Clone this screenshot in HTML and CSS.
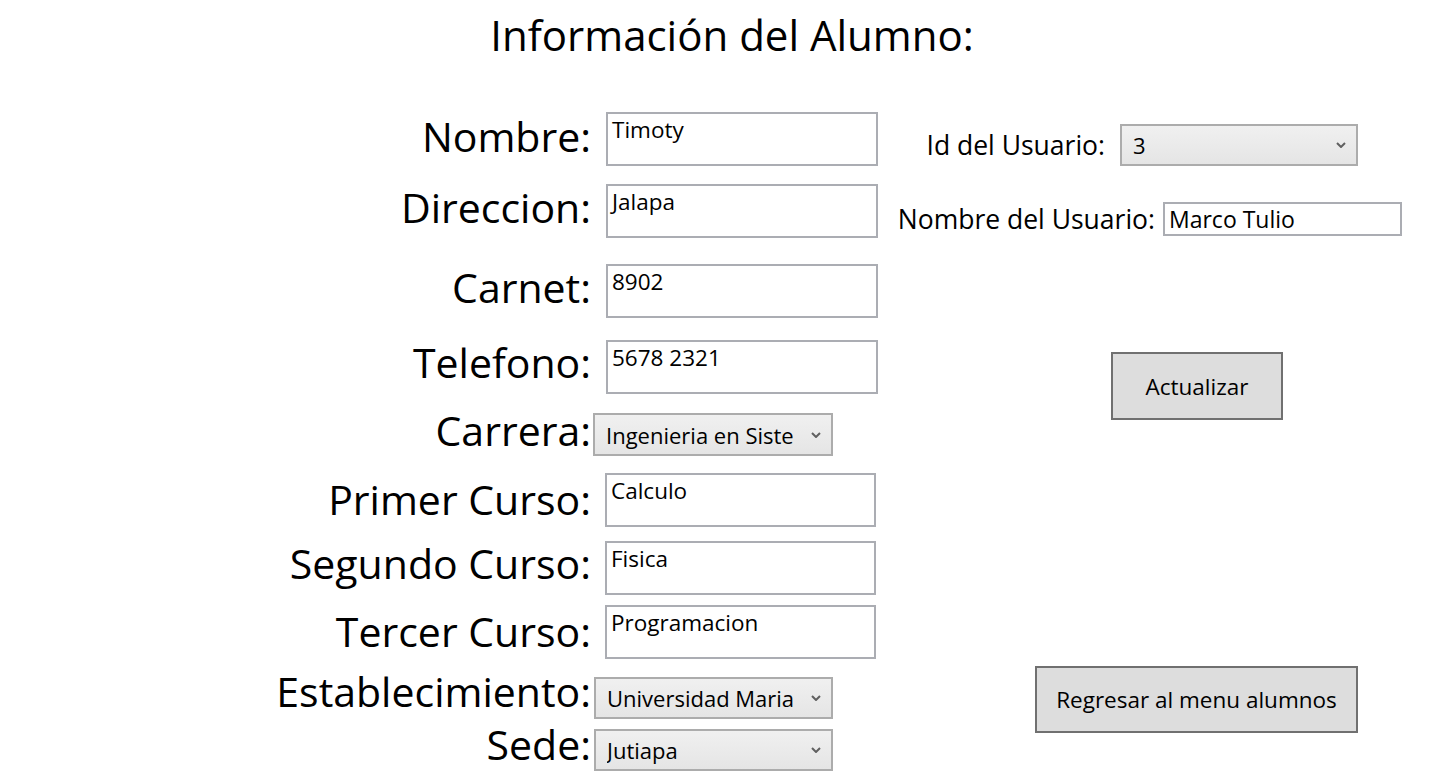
FILE: index.html
```html
<!DOCTYPE html>
<html lang="es">
<head>
<meta charset="utf-8">
<title>Información del Alumno</title>
<link rel="stylesheet" href="styles.css">
</head>
<body>
<h1 class="title">Información del Alumno:</h1>
<div class="main">
  <div class="labels">
    <div class="lbl">Nombre:</div>
    <div class="lbl l-direccion">Direccion:</div>
    <div class="lbl l-carnet">Carnet:</div>
    <div class="lbl l-telefono">Telefono:</div>
    <div class="lbl l-carrera">Carrera:</div>
    <div class="lbl l-primer">Primer Curso:</div>
    <div class="lbl l-segundo">Segundo Curso:</div>
    <div class="lbl l-tercer">Tercer Curso:</div>
    <div class="lbl l-estab">Establecimiento:</div>
    <div class="lbl l-sede">Sede:</div>
  </div>
  <div class="fields">
    <div class="tb">Timoty</div>
    <div class="tb f-direccion">Jalapa</div>
    <div class="tb f-carnet">8902</div>
    <div class="tb f-telefono">5678 2321</div>
    <div class="cb f-carrera"><span class="cb-text">Ingenieria en Sistemas</span><svg class="chev" width="10" height="6" viewBox="0 0 10 6"><path d="M1 1 L5 5 L9 1" fill="none" stroke="#606060" stroke-width="2"/></svg></div>
    <div class="tb tb-low f-primer">Calculo</div>
    <div class="tb tb-low f-segundo">Fisica</div>
    <div class="tb tb-low f-tercer">Programacion</div>
    <div class="cb cb-low f-estab"><span class="cb-text">Universidad Mariano Galvez</span><svg class="chev" width="10" height="6" viewBox="0 0 10 6"><path d="M1 1 L5 5 L9 1" fill="none" stroke="#606060" stroke-width="2"/></svg></div>
    <div class="cb cb-low f-sede"><span class="cb-text">Jutiapa</span><svg class="chev" width="10" height="6" viewBox="0 0 10 6"><path d="M1 1 L5 5 L9 1" fill="none" stroke="#606060" stroke-width="2"/></svg></div>
  </div>
  <div class="side">
    <div class="side-row">
      <span class="side-lbl lbl-id">Id del Usuario:</span>
      <div class="cb cb-id"><span class="cb-text">3</span><svg class="chev" width="10" height="6" viewBox="0 0 10 6"><path d="M1 1 L5 5 L9 1" fill="none" stroke="#606060" stroke-width="2"/></svg></div>
    </div>
    <div class="side-row r-user">
      <span class="side-lbl lbl-user">Nombre del Usuario:</span>
      <div class="tb tb-user">Marco Tulio</div>
    </div>
    <button class="btn btn-act">Actualizar</button>
    <button class="btn btn-back">Regresar al menu alumnos</button>
  </div>
</div>
</body>
</html>
```

FILE: styles.css
```css
html, body {
  margin: 0;
  padding: 0;
  background: #ffffff;
}

body {
  width: 1442px;
  height: 780px;
  overflow: hidden;
  font-family: "Segoe UI", "Open Sans", "Noto Sans", sans-serif;
  color: #000000;
}

.title {
  margin: 10px 0 0;
  padding-left: 22px;
  font-size: 42px;
  font-weight: 400;
  line-height: 50px;
  text-align: center;
}

.main {
  display: flex;
  align-items: flex-start;
}

/* left labels column */
.labels {
  flex: none;
  width: 591px;
  padding-top: 57px;
  text-align: right;
}

.lbl {
  font-size: 41px;
  line-height: 38px;
  white-space: nowrap;
}

.l-direccion { margin-top: 33px; }
.l-carnet { margin-top: 42px; }
.l-telefono { margin-top: 37px; }
.l-carrera { margin-top: 30px; }
.l-primer { margin-top: 31px; }
.l-segundo { margin-top: 26px; }
.l-tercer { margin-top: 30px; }
.l-estab { margin-top: 22px; }
.l-sede { margin-top: 15px; }

/* fields column */
.fields {
  flex: none;
  width: 287px;
  margin-left: 2px;
  padding-top: 52px;
  display: flex;
  flex-direction: column;
  align-items: flex-start;
}

.tb {
  box-sizing: border-box;
  width: 272px;
  height: 54px;
  margin-left: 13px;
  border: 2px solid #abadb3;
  background: #ffffff;
  padding: 2px 4px 0;
  font-size: 22.5px;
  line-height: 28px;
  white-space: nowrap;
  overflow: hidden;
}

.tb-low {
  width: 271px;
  margin-left: 12px;
}

.cb {
  box-sizing: border-box;
  width: 240px;
  height: 43px;
  border: 2px solid #acacac;
  background: linear-gradient(#f0f0f0, #e5e5e5);
  display: flex;
  align-items: center;
  padding-left: 11px;
  font-size: 22px;
}

.cb-low {
  width: 239px;
  height: 42px;
  margin-left: 1px;
}

.cb-text {
  flex: 1 1 0;
  min-width: 0;
  overflow: hidden;
  white-space: nowrap;
}

.chev {
  flex: none;
  margin-left: 18px;
  margin-right: 10px;
}

.f-direccion { margin-top: 18px; }
.f-carnet { margin-top: 26px; }
.f-telefono { margin-top: 22px; }
.f-carrera { margin-top: 19px; }
.f-primer { margin-top: 17px; }
.f-segundo { margin-top: 14px; }
.f-tercer { margin-top: 10px; }
.f-estab { margin-top: 18px; }
.f-sede { margin-top: 10px; }

/* right side panel */
.side {
  flex: none;
  margin-left: 10px;
  padding-top: 64px;
  display: flex;
  flex-direction: column;
  align-items: flex-start;
}

.side-row {
  display: flex;
  align-items: center;
}

.side-lbl {
  font-size: 26.5px;
  line-height: 30px;
  text-align: right;
  white-space: nowrap;
}

.lbl-id {
  width: 215px;
  margin-right: 15px;
}

.lbl-user {
  width: 265px;
  margin-right: 8px;
}

.cb-id {
  width: 238px;
  height: 42px;
}

.r-user {
  margin-top: 36px;
}

.tb-user {
  width: 239px;
  height: 34px;
  margin-left: 0;
  padding: 0 4px;
  font-size: 23px;
  line-height: 30px;
}

.btn {
  box-sizing: border-box;
  background: #dddddd;
  border: 2px solid #707070;
  border-radius: 0;
  padding: 0;
  font-family: inherit;
  font-size: 22.5px;
  color: #000000;
}

.btn-act {
  margin-top: 116px;
  margin-left: 221px;
  width: 172px;
  height: 68px;
}

.btn-back {
  margin-top: 246px;
  margin-left: 145px;
  width: 323px;
  height: 67px;
}
```
